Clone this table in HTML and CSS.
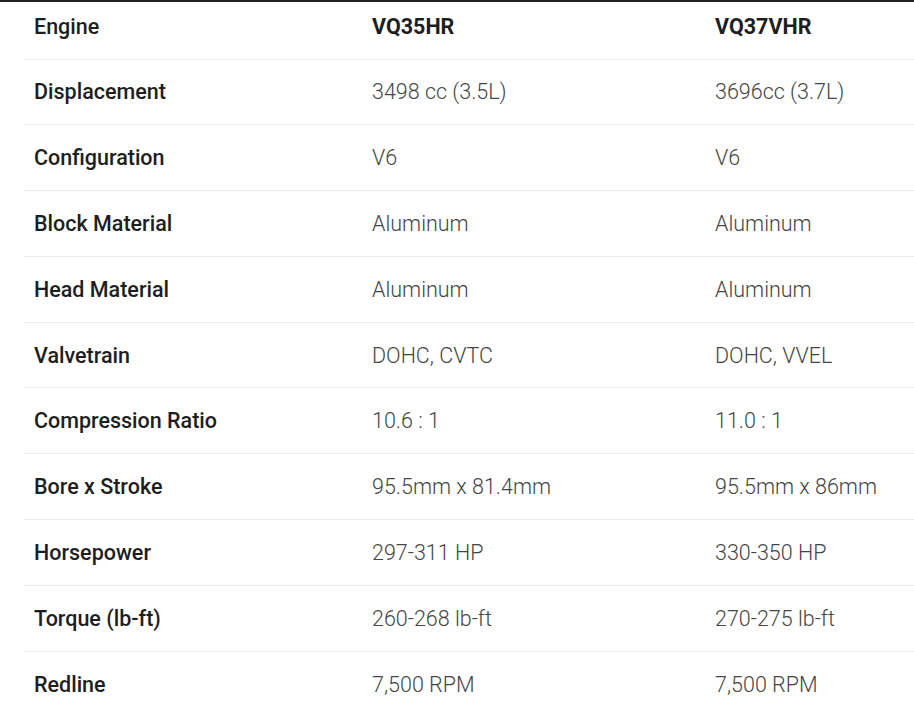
FILE: index.html
```html
<!DOCTYPE html>
<html>
<head>
<meta charset="utf-8">
<link rel="stylesheet" href="styles.css">
</head>
<body>
<div class="topbar"></div>
<div class="wrap">
<table class="specs">
  <colgroup>
    <col class="c1"><col class="c2"><col class="c3">
  </colgroup>
  <thead>
    <tr><th class="label">Engine</th><th>VQ35HR</th><th>VQ37VHR</th></tr>
  </thead>
  <tbody>
    <tr><td class="label">Displacement</td><td>3498 cc (3.5L)</td><td>3696cc (3.7L)</td></tr>
    <tr><td class="label">Configuration</td><td>V6</td><td>V6</td></tr>
    <tr><td class="label">Block Material</td><td>Aluminum</td><td>Aluminum</td></tr>
    <tr><td class="label">Head Material</td><td>Aluminum</td><td>Aluminum</td></tr>
    <tr><td class="label">Valvetrain</td><td>DOHC, CVTC</td><td>DOHC, VVEL</td></tr>
    <tr><td class="label">Compression Ratio</td><td>10.6 : 1</td><td>11.0 : 1</td></tr>
    <tr><td class="label">Bore x Stroke</td><td>95.5mm x 81.4mm</td><td>95.5mm x 86mm</td></tr>
    <tr><td class="label">Horsepower</td><td>297-311 HP</td><td>330-350 HP</td></tr>
    <tr><td class="label">Torque (lb-ft)</td><td>260-268 lb-ft</td><td>270-275 lb-ft</td></tr>
    <tr><td class="label">Redline</td><td>7,500 RPM</td><td>7,500 RPM</td></tr>
  </tbody>
</table>
</div>
</body>
</html>
```
FILE: styles.css
```css
html, body {
  margin: 0;
  padding: 0;
  background: #fff;
  overflow: hidden;
}
body {
  font-family: Roboto, "Liberation Sans", sans-serif;
  font-size: 21.5px;
  color: #444;
}
.topbar {
  height: 2px;
  background: #222;
}
.wrap {
  padding-left: 24px;
}
.specs {
  border-collapse: collapse;
  table-layout: fixed;
  width: 890px;
}
.c1 { width: 338px; }
.c2 { width: 343px; }
.c3 { width: 209px; }
.specs th,
.specs td {
  text-align: left;
  padding: 0 0 0 10px;
  height: 64.8px;
  vertical-align: middle;
  border-bottom: 1px solid #ebebeb;
  white-space: nowrap;
}
.specs th {
  box-sizing: border-box;
  height: 57px;
  padding-bottom: 7px;
  font-weight: 700;
  color: #1e1e1e;
}
.specs td {
  font-weight: 300;
  color: #454545;
}
.specs .label {
  font-weight: 500;
  color: #1e1e1e;
}
.specs tbody tr:last-child td {
  border-bottom: none;
}
```
